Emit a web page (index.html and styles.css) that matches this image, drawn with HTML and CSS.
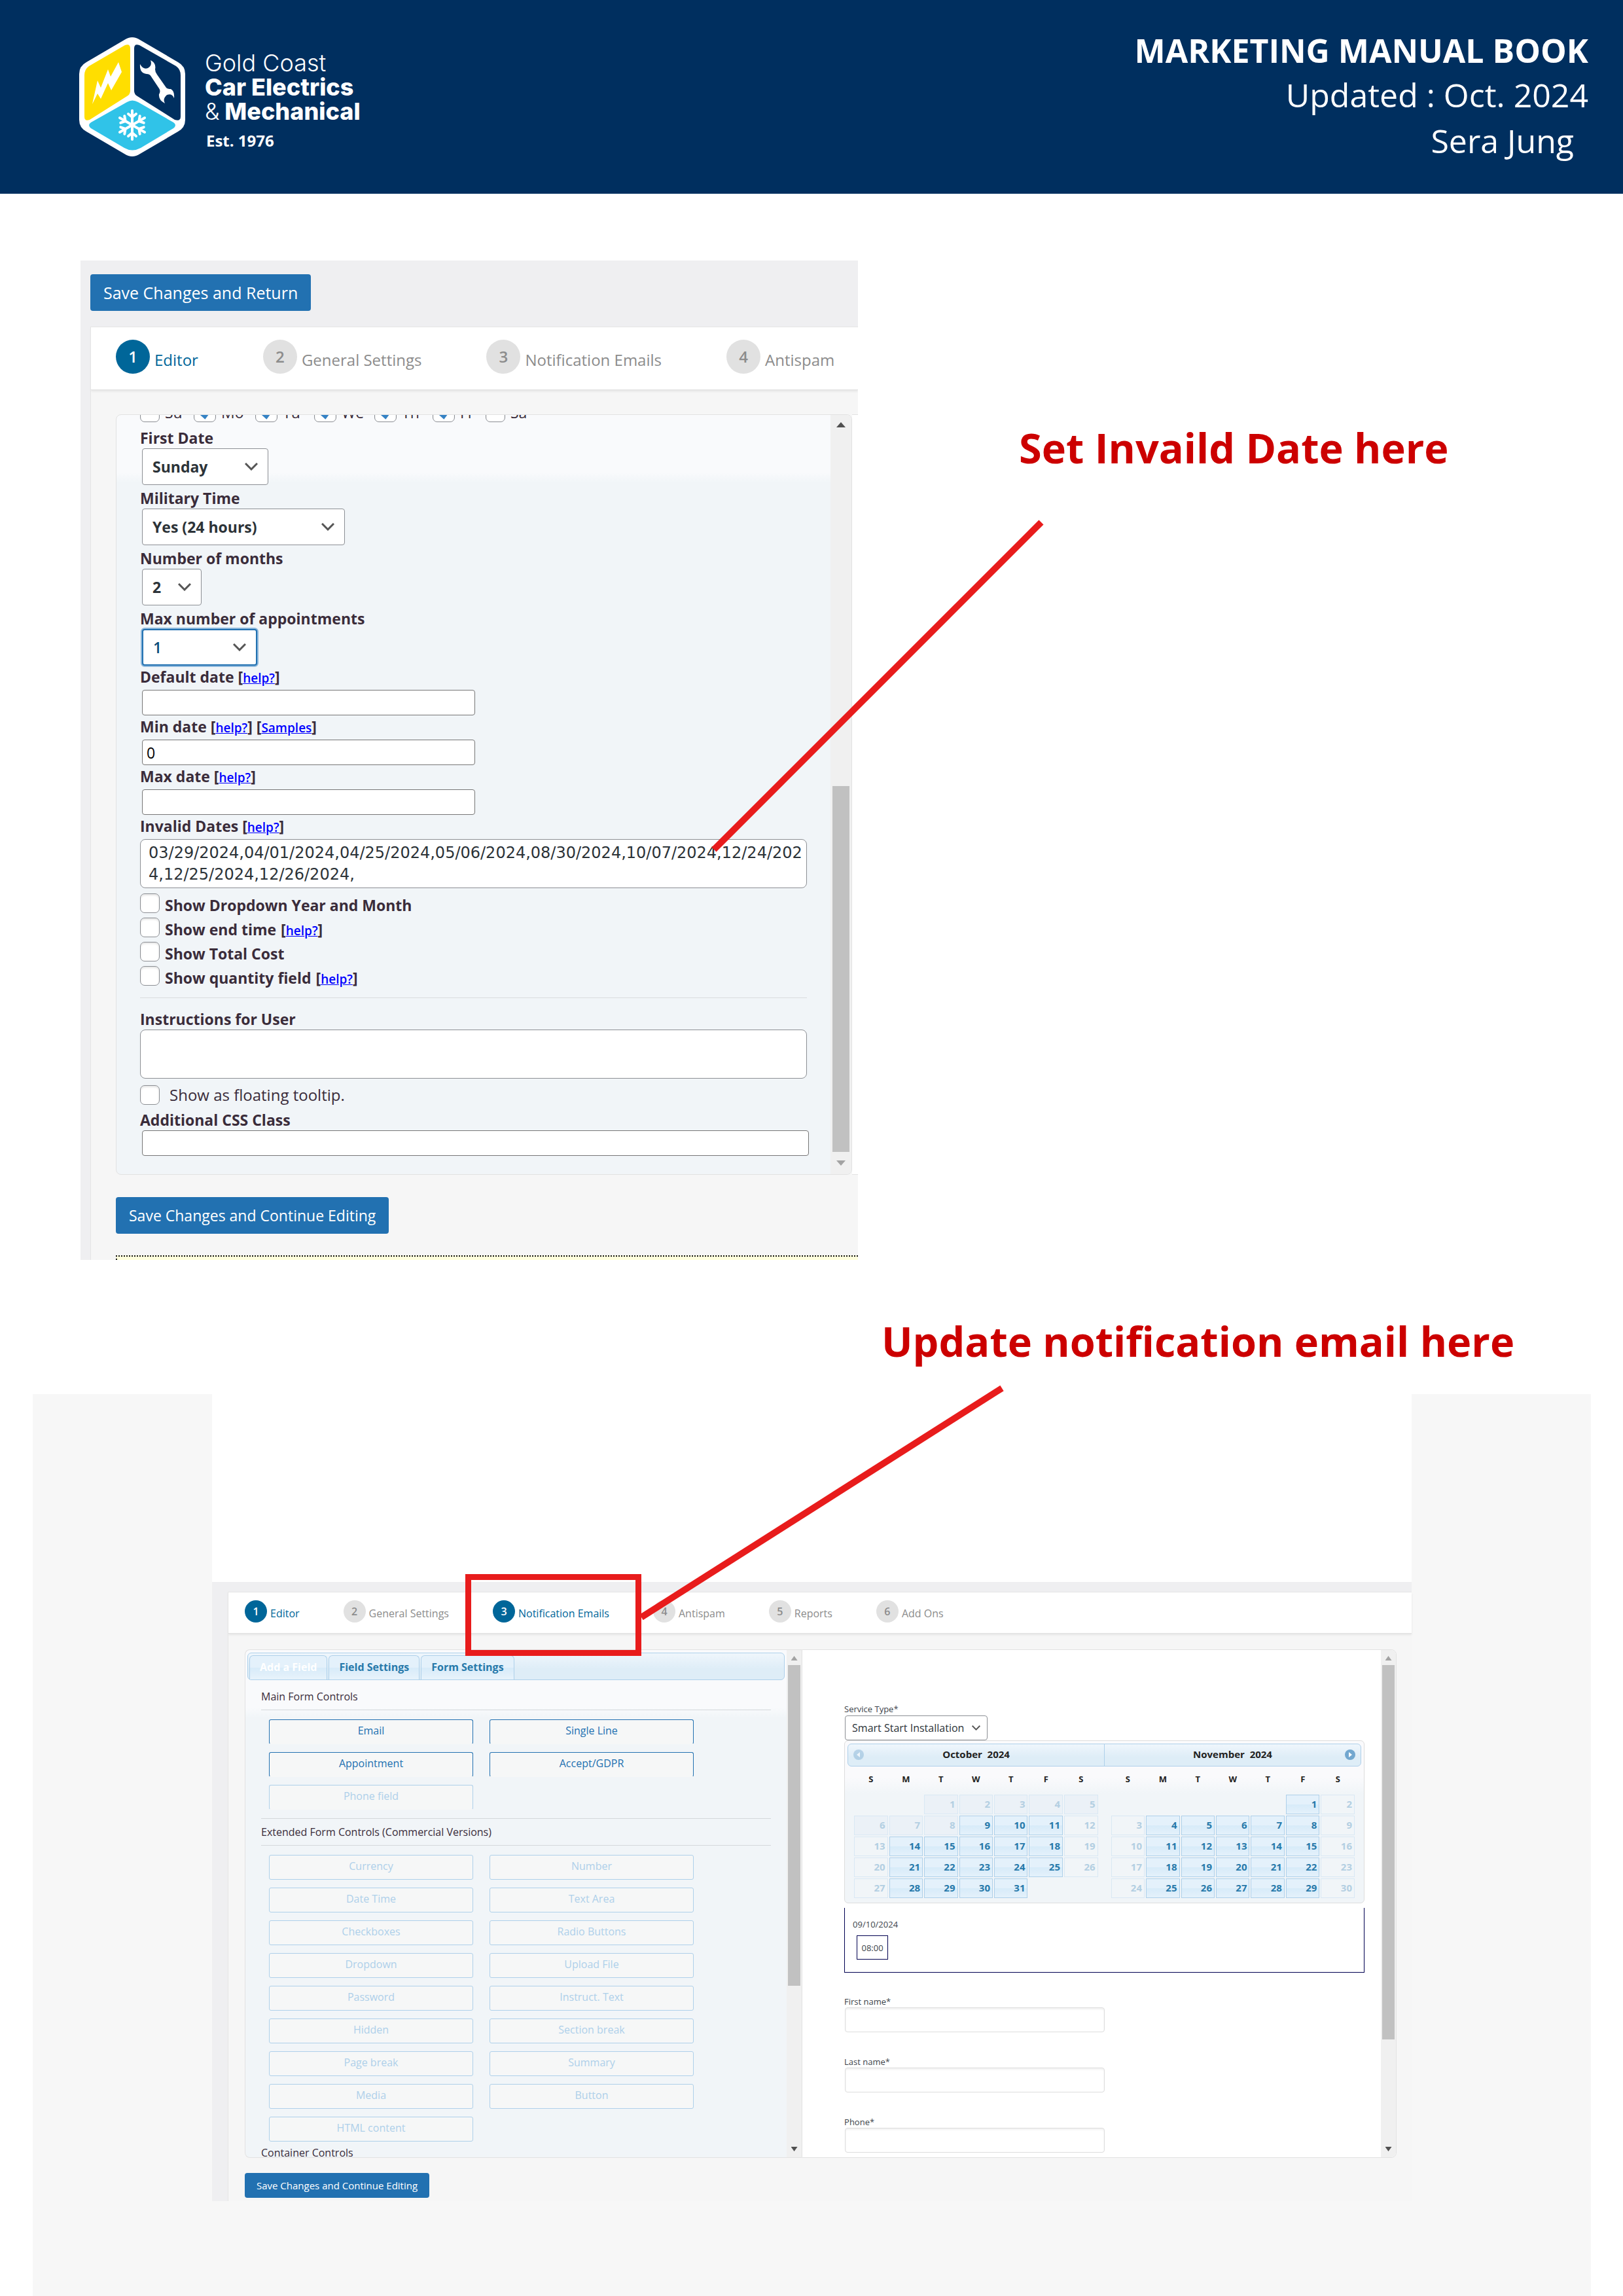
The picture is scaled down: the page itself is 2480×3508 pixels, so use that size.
FILE: index.html
```html
<!DOCTYPE html>
<html lang="en">
<head>
<meta charset="utf-8">
<title>Marketing Manual Book</title>
<link rel="stylesheet" href="styles.css">
</head>
<body>
<header class="masthead">
  <div class="brand">
    <svg class="brand-mark" viewBox="0 0 162 182" aria-hidden="true">
      <path fill="#fff" d="M69 4Q81-4 93 4L151 38Q162 44 162 56V126Q162 138 151 144L93 178Q81 186 69 178L11 144Q0 138 0 126V56Q0 44 11 38Z"/>
      <path fill="#ffde00" d="M70 12Q78 9 78 17V82Q78 87 73 90L16 126Q8 129 8 121V58Q8 49 15 44Z"/>
      <path fill="#002f5f" d="M92 12Q84 9 84 17V82Q84 87 89 90L146 126Q155 129 155 121V58Q155 49 148 44Z"/>
      <path fill="#30c3e8" d="M73 99Q81 94 90 99L144 130Q150 134 144 139L94 169Q81 176 69 169L18 139Q12 134 18 130Z"/>
      <path fill="#fff" d="M20 102L28 66L33 77L44 49L48 60L60 38L65 53L49 81L44 70L33 94L28 86Z"/>
      <path fill="#fff" d="M109 35Q118 39 116 49Q116 53 119 57L133 77Q135 79 140 79Q146 82 145 93Q142 85 134 88Q127 94 131 101Q121 96 122 87Q125 82 122 78L110 60Q108 56 103 56Q92 55 93 41Q98 50 105 47Q112 43 109 35Z"/>
      <g stroke="#fff" stroke-width="4" stroke-linecap="round" fill="none">
        <g id="arm"><path d="M81 134V112M81 122L75 117M81 122L87 117"/></g>
        <use href="#arm" transform="rotate(60 81 134)"/><use href="#arm" transform="rotate(120 81 134)"/>
        <use href="#arm" transform="rotate(180 81 134)"/><use href="#arm" transform="rotate(240 81 134)"/>
        <use href="#arm" transform="rotate(300 81 134)"/>
      </g>
    </svg>
    <div class="brand-name">
      <span class="brand-light">Gold Coast</span>
      <span>Car Electrics</span>
      <span><span class="brand-light">&amp;</span> Mechanical</span>
      <small>Est. 1976</small>
    </div>
  </div>
  <div class="doc-info">
    <h1>MARKETING MANUAL BOOK</h1>
    <p>Updated : Oct. 2024</p>
    <p class="author">Sera Jung</p>
  </div>
</header>

<main>
<section class="step-dates">
  <div class="shot">
    <div class="topbar"><button class="primary" type="button">Save Changes and Return</button></div>
    <div class="editor">
      <nav class="steps">
        <a class="on" href="#editor"><b>1</b><span>Editor</span></a>
        <a href="#general"><b>2</b><span>General Settings</span></a>
        <a href="#emails"><b>3</b><span>Notification Emails</span></a>
        <a href="#antispam"><b>4</b><span>Antispam</span></a>
      </nav>
      <div class="work">
        <form class="panel">
          <div class="panel-body">
            <div class="weekdays">
              <label><input type="checkbox">Su</label>
              <label><input type="checkbox" checked>Mo</label>
              <label><input type="checkbox" checked>Tu</label>
              <label><input type="checkbox" checked>We</label>
              <label><input type="checkbox" checked>Th</label>
              <label><input type="checkbox" checked>Fr</label>
              <label><input type="checkbox">Sa</label>
            </div>
            <label class="cap low" for="first">First Date</label>
            <select id="first" class="w-day"><option>Sunday</option></select>
            <label class="cap low" for="mil">Military Time</label>
            <select id="mil" class="w-time"><option>Yes (24 hours)</option></select>
            <label class="cap low" for="months">Number of months</label>
            <select id="months" class="w-num"><option>2</option></select>
            <label class="cap low" for="max">Max number of appointments</label>
            <select id="max" class="w-max current"><option>1</option></select>
            <div class="cap"><label for="def">Default date</label> [<a href="#help">help?</a>]</div>
            <input id="def" class="line short" type="text">
            <div class="cap"><label for="min">Min date</label> [<a href="#help">help?</a>] [<a href="#samples">Samples</a>]</div>
            <input id="min" class="line short" type="text" value="0">
            <div class="cap"><label for="maxd">Max date</label> [<a href="#help">help?</a>]</div>
            <input id="maxd" class="line short" type="text">
            <div class="cap"><label for="inv">Invalid Dates</label> [<a href="#help">help?</a>]</div>
            <textarea id="inv">03/29/2024,04/01/2024,04/25/2024,05/06/2024,08/30/2024,10/07/2024,12/24/2024,12/25/2024,12/26/2024,</textarea>
            <div class="checks">
              <div><input id="c1" type="checkbox"><label for="c1">Show Dropdown Year and Month</label></div>
              <div><input id="c2" type="checkbox"><label for="c2">Show end time</label><span>[<a href="#help">help?</a>]</span></div>
              <div><input id="c3" type="checkbox"><label for="c3">Show Total Cost</label></div>
              <div><input id="c4" type="checkbox"><label for="c4">Show quantity field</label><span>[<a href="#help">help?</a>]</span></div>
            </div>
            <hr>
            <label class="cap low" for="ins">Instructions for User</label>
            <textarea id="ins"></textarea>
            <label class="tooltip"><input type="checkbox">Show as floating tooltip.</label>
            <label class="cap low" for="css">Additional CSS Class</label>
            <input id="css" class="line" type="text">
          </div>
          <div class="bar bar-low" aria-hidden="true"><i class="up dark"></i><i class="thumb"></i><i class="down"></i></div>
        </form>
        <div class="preview-edge"></div>
      </div>
      <button class="primary next" type="button">Save Changes and Continue Editing</button>
      <div class="notice"></div>
    </div>
  </div>
  <h2>Set Invaild Date here</h2>
  <svg class="pointer pointer-dates" viewBox="0 0 510 510" aria-hidden="true"><path d="M505 5L5 505"/></svg>
</section>

<section class="step-email">
  <h2>Update notification email here</h2>
  <div class="backdrop">
    <div class="shot small">
      <div class="blank"></div>
      <div class="editor">
        <nav class="steps">
          <a class="on" href="#editor"><b>1</b><span>Editor</span></a>
          <a href="#general"><b>2</b><span>General Settings</span></a>
          <a class="on marked" href="#emails"><b>3</b><span>Notification Emails</span></a>
          <a href="#antispam"><b>4</b><span>Antispam</span></a>
          <a href="#reports"><b>5</b><span>Reports</span></a>
          <a href="#addons"><b>6</b><span>Add Ons</span></a>
        </nav>
        <div class="work">
          <div class="panel controls">
            <div class="panel-body">
              <div class="tabs">
                <a class="sel" href="#add">Add a Field</a><a href="#field">Field Settings</a><a href="#form">Form Settings</a>
              </div>
              <div class="groups">
                <h3>Main Form Controls</h3>
                <div class="grid live">
                  <button type="button">Email</button><button type="button">Single Line</button>
                  <button type="button">Appointment</button><button type="button">Accept/GDPR</button>
                  <button type="button" disabled>Phone field</button>
                </div>
                <hr>
                <h3>Extended Form Controls (Commercial Versions)</h3>
                <div class="grid">
                  <button type="button" disabled>Currency</button><button type="button" disabled>Number</button>
                  <button type="button" disabled>Date Time</button><button type="button" disabled>Text Area</button>
                  <button type="button" disabled>Checkboxes</button><button type="button" disabled>Radio Buttons</button>
                  <button type="button" disabled>Dropdown</button><button type="button" disabled>Upload File</button>
                  <button type="button" disabled>Password</button><button type="button" disabled>Instruct. Text</button>
                  <button type="button" disabled>Hidden</button><button type="button" disabled>Section break</button>
                  <button type="button" disabled>Page break</button><button type="button" disabled>Summary</button>
                  <button type="button" disabled>Media</button><button type="button" disabled>Button</button>
                  <button type="button" disabled>HTML content</button>
                </div>
                <h3 class="last">Container Controls</h3>
              </div>
            </div>
            <div class="bar bar-left" aria-hidden="true"><i class="up"></i><i class="thumb"></i><i class="down dark"></i></div>
          </div>
          <form class="panel preview">
            <div class="panel-body">
              <label for="svc">Service Type*</label>
              <select id="svc"><option>Smart Start Installation</option></select>
              <div class="calendar">
                <div class="cal-head">
                  <div><svg class="arrow faded" viewBox="0 0 16 16"><circle cx="8" cy="8" r="8"/><path d="M10 4L5 8L10 12Z"/></svg><span>October&nbsp; 2024</span></div>
                  <div><span>November&nbsp; 2024</span><svg class="arrow" viewBox="0 0 16 16"><circle cx="8" cy="8" r="8"/><path d="M6 4L11 8L6 12Z"/></svg></div>
                </div>
                <div class="months">
                  <table>
                    <thead><tr><th>S</th><th>M</th><th>T</th><th>W</th><th>T</th><th>F</th><th>S</th></tr></thead>
                    <tbody>
                    <tr><td></td><td></td><td><span class="past">1</span></td><td><span class="past">2</span></td><td><span class="past">3</span></td><td><span class="past">4</span></td><td><span class="past">5</span></td></tr>
                    <tr><td><span class="past">6</span></td><td><span class="past">7</span></td><td><span class="past">8</span></td><td><a href="#d">9</a></td><td><a href="#d">10</a></td><td><a href="#d">11</a></td><td><span>12</span></td></tr>
                    <tr><td><span>13</span></td><td><a href="#d">14</a></td><td><a href="#d">15</a></td><td><a href="#d">16</a></td><td><a href="#d">17</a></td><td><a href="#d">18</a></td><td><span>19</span></td></tr>
                    <tr><td><span>20</span></td><td><a href="#d">21</a></td><td><a href="#d">22</a></td><td><a href="#d">23</a></td><td><a href="#d">24</a></td><td><a href="#d">25</a></td><td><span>26</span></td></tr>
                    <tr><td><span>27</span></td><td><a href="#d">28</a></td><td><a href="#d">29</a></td><td><a href="#d">30</a></td><td><a href="#d">31</a></td><td></td><td></td></tr>
                    </tbody>
                  </table>
                  <table>
                    <thead><tr><th>S</th><th>M</th><th>T</th><th>W</th><th>T</th><th>F</th><th>S</th></tr></thead>
                    <tbody>
                    <tr><td></td><td></td><td></td><td></td><td></td><td><a href="#d">1</a></td><td><span>2</span></td></tr>
                    <tr><td><span>3</span></td><td><a href="#d">4</a></td><td><a href="#d">5</a></td><td><a href="#d">6</a></td><td><a href="#d">7</a></td><td><a href="#d">8</a></td><td><span>9</span></td></tr>
                    <tr><td><span>10</span></td><td><a href="#d">11</a></td><td><a href="#d">12</a></td><td><a href="#d">13</a></td><td><a href="#d">14</a></td><td><a href="#d">15</a></td><td><span>16</span></td></tr>
                    <tr><td><span>17</span></td><td><a href="#d">18</a></td><td><a href="#d">19</a></td><td><a href="#d">20</a></td><td><a href="#d">21</a></td><td><a href="#d">22</a></td><td><span>23</span></td></tr>
                    <tr><td><span>24</span></td><td><a href="#d">25</a></td><td><a href="#d">26</a></td><td><a href="#d">27</a></td><td><a href="#d">28</a></td><td><a href="#d">29</a></td><td><span>30</span></td></tr>
                    </tbody>
                  </table>
                </div>
              </div>
              <div class="slots"><p>09/10/2024</p><button type="button">08:00</button></div>
              <div class="person"><label for="fn">First name*</label><input id="fn" type="text"></div>
              <div class="person"><label for="ln">Last name*</label><input id="ln" type="text"></div>
              <div class="person"><label for="ph">Phone*</label><input id="ph" type="text"></div>
            </div>
            <div class="bar bar-right" aria-hidden="true"><i class="up"></i><i class="thumb"></i><i class="down dark"></i></div>
          </form>
        </div>
        <button class="primary next" type="button">Save Changes and Continue Editing</button>
      </div>
    </div>
  </div>
  <svg class="pointer pointer-email" viewBox="0 0 560 360" aria-hidden="true"><path d="M555 5L4 355"/></svg>
</section>
</main>
</body>
</html>
```
FILE: styles.css
```css
* { box-sizing: border-box; }
body {
  margin: 0;
  min-height: 100vh;
  display: flex;
  flex-direction: column;
  background: #fff;
  font-family: "Open Sans", "Noto Sans", sans-serif;
}
h1, h2, h3, p { margin: 0; }
a { text-decoration: none; }
button, input, select, textarea { font: inherit; margin: 0; }
main { flex: 1; display: flex; flex-direction: column; }

/* Page header */
.masthead {
  display: flex;
  justify-content: space-between;
  align-items: flex-start;
  height: 296px;
  padding: 44px 53px 0 121px;
  background: #002f5f;
  color: #fff;
}
.brand { display: flex; gap: 30px; padding-top: 13px; }
.brand-mark { width: 162px; height: 182px; }
.brand-name {
  display: flex;
  flex-direction: column;
  padding-top: 21px;
  font: 800 36px/37px Inter, sans-serif;
}
.brand-light { font-weight: 300; }
.brand-name small { margin-top: 10px; padding-left: 2px; font: 700 24px/32px "Open Sans", sans-serif; }
.doc-info { text-align: right; font-size: 50px; line-height: 68px; }
.doc-info h1 { font-size: 50px; line-height: 67px; font-weight: 700; }
.author { padding: 2px 22px 0 0; }

h2 { color: #c00; font-size: 63px; line-height: 88px; font-weight: 700; }
.pointer { position: absolute; fill: none; stroke: #e81c1c; stroke-width: 10; }

/* Shared admin screen */
.shot { background: #efeff1; overflow: hidden; }
.primary {
  border: 0;
  border-radius: 4px;
  background: #2271b1;
  color: #fff;
  font-size: 23px;
  height: 56px;
  padding: 0 20px;
}
.editor { margin-left: 15px; border: 1px solid #e5e5e5; border-width: 1px 0 0 1px; background: #f6f6f6; }
.steps {
  display: flex;
  gap: 99px;
  height: 96px;
  padding: 19px 38px;
  background: #fff;
  border-bottom: 1px solid #e2e2e2;
  box-shadow: 0 2px 3px #e4e4e4;
  font-size: 24px;
  font-weight: 500;
}
.steps a { position: relative; display: flex; align-items: center; gap: 7px; height: 52px; color: #8c8c8c; white-space: nowrap; }
.steps b { width: 52px; line-height: 52px; border-radius: 50%; background: #e1e1e1; text-align: center; font-weight: 600; }
.steps span { padding-top: 9px; }
.steps .on { color: #069; }
.steps .on b { background: #069; color: #fff; }
.work { display: flex; padding: 37px 0 0 38px; }
.panel {
  display: flex;
  flex: 1;
  min-width: 0;
  border: 1px solid #e2e2e2;
  border-radius: 8px;
  background: linear-gradient(#f9fafc 88px, #f1f5f8 104px);
  overflow: hidden;
}
.panel-body { flex: 1; min-width: 0; overflow: hidden; }
.bar { display: flex; flex-direction: column; align-items: center; width: 32px; background: #f0f0f0; }
.bar i { display: block; }
.thumb { background: #c1c1c1; }
.up, .down { width: 14px; height: 8px; background: #a3a3a3; }
.up { clip-path: polygon(50% 0, 100% 100%, 0 100%); }
.down { clip-path: polygon(0 0, 100% 0, 50% 100%); }
.bar .dark { background: #505050; }

select {
  display: block;
  appearance: none;
  border: 1px solid #8c8f94;
  border-radius: 4px;
  color: #2c3338;
  background: #fff url("data:image/svg+xml,%3Csvg xmlns='http://www.w3.org/2000/svg' viewBox='0 0 20 12'%3E%3Cpath d='M1 1L10 10L19 1' fill='none' stroke='%23555' stroke-width='3'/%3E%3C/svg%3E") no-repeat right 15px center / 20px 12px;
}
input[type="checkbox"] {
  appearance: none;
  flex: none;
  width: 30px;
  height: 30px;
  border: 1px solid #8c8f94;
  border-radius: 7px;
  background: #fff;
  box-shadow: inset 0 2px 3px #e4e4e4;
}

/* Date settings */
.step-dates {
  position: relative;
  display: grid;
  grid-template-columns: 1188fr 1169fr;
  padding: 102px 0 0 123px;
}
.step-dates h2 { padding: 242px 0 0 246px; }
.pointer-dates { left: 1086px; top: 497px; width: 510px; height: 510px; }
.topbar { height: 101px; padding: 21px 15px; }
.topbar .primary { font-size: 25px; }
.step-dates .panel { height: 1162px; color: #3a2c3a; font-size: 23px; }
.step-dates .panel-body { padding: 0 36px; }
.preview-edge { width: 9px; background: #fff; border: 1px solid #e2e2e2; border-width: 1px 0; }
.weekdays {
  display: grid;
  grid-template-columns: 82px 94px 90px 92px 89px 81px 90px;
  align-content: end;
  height: 11px;
  margin-bottom: 4px;
  overflow: hidden;
}
.weekdays label { display: flex; gap: 8px; line-height: 22px; align-items: center; }
.weekdays input:checked {
  width: 34px;
  background: #fff url("data:image/svg+xml,%3Csvg xmlns='http://www.w3.org/2000/svg' viewBox='0 0 30 30'%3E%3Cpath d='M6 14L15 22L24 10' fill='none' stroke='%233582c4' stroke-width='5'/%3E%3C/svg%3E") center / 30px 30px;
}
.cap { display: block; font-weight: 700; line-height: 34px; padding-bottom: 3px; }
.cap.low { line-height: 32px; padding: 4px 0 0; }
.panel a[href="#help"], .panel a[href="#samples"] { color: #00f; text-decoration: underline; font-size: 19px; font-weight: 600; line-height: 19px; }
.step-dates select { height: 56px; margin-left: 3px; padding: 0 15px; font-weight: 700; }
.w-day { width: 193px; }
.w-time { width: 310px; }
.w-num { width: 91px; }
.w-max { width: 176px; }
.step-dates .current { border: 2px solid #2271b1; box-shadow: 0 0 0 2px #8db8dc; color: #0a4b78; font-weight: 600; }
.line { display: block; width: 100%; height: 39px; margin-left: 3px; padding: 0 6px; border: 1px solid #767676; border-radius: 4px; background: #fff; }
.short { width: 509px; }
textarea {
  display: block;
  width: 100%;
  height: 75px;
  padding: 4px 4px 0 12px;
  border: 1px solid #8c8f94;
  border-radius: 8px;
  resize: none;
  overflow: hidden;
  color: #2c3338;
  font: 24px/33px "DejaVu Sans", sans-serif;
  word-break: break-all;
}
.checks { padding-top: 8px; font-weight: 700; line-height: 37px; }
.checks div { display: flex; align-items: flex-start; height: 37px; }
.checks label { padding: 0 7px 0 8px; }
.step-dates hr { margin: 11px 0 12px; border: 0; border-top: 1px solid #d9dcde; }
.tooltip { display: flex; align-items: center; gap: 15px; height: 43px; padding-top: 6px; font-size: 24px; }
.bar-low { padding-top: 11px; }
.bar-low .thumb { width: 26px; height: 559px; margin: 548px 0 13px; }
.step-dates .next { display: block; margin: 34px 0 33px 38px; }
.notice { height: 7px; margin-left: 38px; background: #ffffdc; border: 2px dotted #111; border-width: 2px 0 0 2px; }

/* Notification emails */
.step-email { position: relative; flex: 1; display: flex; flex-direction: column; padding: 80px 49px 0 50px; }
.step-email h2 { padding: 0 0 37px 1297px; }
.backdrop { flex: 1; background: #f7f7f7; padding: 0 274px; }
.pointer-email { left: 976px; top: 191px; width: 560px; height: 360px; }
.blank { height: 287px; margin-bottom: 15px; background: #fff; }
.small { height: 1233px; overflow: visible; }
.small .editor { margin-left: 24px; height: 931px; }
.small .steps { gap: 67px; height: 63px; padding: 12px 25px; font-size: 16px; }
.small .steps a { height: 34px; gap: 5px; }
.small .steps b { width: 34px; line-height: 34px; }
.small .steps span { padding-top: 6px; }
.marked::after { content: ""; position: absolute; inset: -40px -49px -51px -42px; border: 9px solid #e81c1c; z-index: 1; }
.small .work { padding: 24px 23px 0 25px; }
.small .panel { height: 777px; }
.small .bar { width: 23px; padding: 9px 0; }
.small .bar i { flex: none; }
.small .up, .small .down { width: 10px; height: 7px; }
.small .thumb { width: 19px; margin-top: 7px; }
.small .down { margin-top: auto; }
.bar-left .thumb { height: 490px; }
.bar-right .thumb { height: 572px; }
.small .controls { flex: 852; border-radius: 8px 0 0 8px; border-right: 0; }
.small .preview { flex: 909; background: #fff; border-radius: 0 8px 8px 0; }
.controls { color: #3a2c3a; font-size: 16px; }
.tabs {
  display: flex;
  gap: 2px;
  height: 42px;
  margin: 4px 3px 0;
  padding: 3px 2px 0;
  border: 1px solid #aed0ea;
  border-radius: 6px;
  background: linear-gradient(#eff6fc, #deedf7 60%);
}
.tabs a {
  height: 37px;
  padding: 0 15px;
  border: 1px solid #aed0ea;
  border-bottom: 0;
  border-radius: 6px 6px 0 0;
  background: linear-gradient(#e4f1fb 50%, #d7ebf9 50%, #e8f3fb);
  color: #2779aa;
  font-weight: 700;
  line-height: 35px;
}
.tabs .sel { color: #fff; }
.groups { padding: 15px 24px 0; }
.groups h3 { padding-bottom: 10px; border-bottom: 1px solid #d4d8db; font-size: 16px; font-weight: 400; line-height: 20px; }
.groups h3.last { border: 0; padding-top: 7px; }
.groups hr { margin: 13px 0 10px; border: 0; border-top: 1px solid #d4d8db; }
.grid { display: grid; grid-template-columns: 312px 312px; gap: 12px 25px; padding: 14px 0 0 12px; }
.grid button { height: 38px; padding: 0 0 4px; border: 1px solid #2271b1; border-radius: 3px; background: #f6f7f7; color: #2271b1; }
.grid button:disabled { border-color: #aed0ea; color: #aed0ea; }
.live button, .live button:disabled { border-bottom-color: transparent; }
.small .next { display: block; height: 38px; margin: 23px 0 0 25px; padding: 0 18px; font-size: 15px; }

.preview .panel-body { padding: 81px 25px 0 64px; color: #3c434a; font-size: 13px; font-weight: 500; }
.preview label { display: block; line-height: 18px; }
.preview select { width: 218px; height: 38px; margin: 1px 0 0 1px; padding: 0 10px; font-size: 16px; font-weight: 400; background-position: right 10px center; background-size: 13px 8px; }
.calendar { height: 249px; padding: 4px 4px 0; border: 1px solid #ddd; border-radius: 6px; background: linear-gradient(#fafafc 55px, #f1f5f8 80px); }
.cal-head { display: flex; height: 35px; border: 1px solid #aed0ea; border-radius: 6px; background: linear-gradient(#eff6fc, #deedf7 60%); color: #222; font-size: 15px; font-weight: 700; line-height: 31px; text-align: center; }
.cal-head div { position: relative; flex: 1; }
.cal-head div + div { border-left: 1px solid #aed0ea; }
.arrow { position: absolute; top: 8px; right: 8px; width: 16px; fill: #72a7cf; }
.arrow.faded { left: 8px; opacity: .4; }
.arrow path { fill: #fff; }
.months { display: flex; gap: 18px; padding: 0 9px; }
.months table { flex: 1; width: 0; border-collapse: collapse; table-layout: fixed; font-size: 15px; font-weight: 700; }
.months th { height: 42px; padding: 0; color: #222; font-size: 13px; line-height: 38px; vertical-align: top; }
.months td { height: 32px; padding: 1px; }
.months td > * { display: block; height: 30px; padding-right: 3px; border: 1px solid #d9e8f4; color: #b3cfe2; line-height: 26px; text-align: right; }
.months td > .past { background: #ebf1f7; }
.months td > a { border-color: #aed0ea; background: linear-gradient(#e4f1fb 50%, #d7ebf9 50%, #e4f1fb); color: #2779aa; }
.slots { height: 99px; margin-top: 7px; padding: 14px 12px 0; border: 1px solid #000050; border-top: 0; font-weight: 400; }
.slots p { line-height: 22px; }
.slots button { height: 37px; width: 48px; margin: 6px 0 0 6px; padding: 0; border: 1px solid #000050; background: #fff; color: #3c434a; font-size: 13px; }
.person { height: 91px; padding-top: 35px; margin-bottom: 1px; }
.person label { line-height: 18px; }
.person input { display: block; width: 397px; height: 38px; margin-left: 1px; border: 1px solid #ddd; border-radius: 4px; box-shadow: inset 0 2px 3px #f0f0f0; }
```
